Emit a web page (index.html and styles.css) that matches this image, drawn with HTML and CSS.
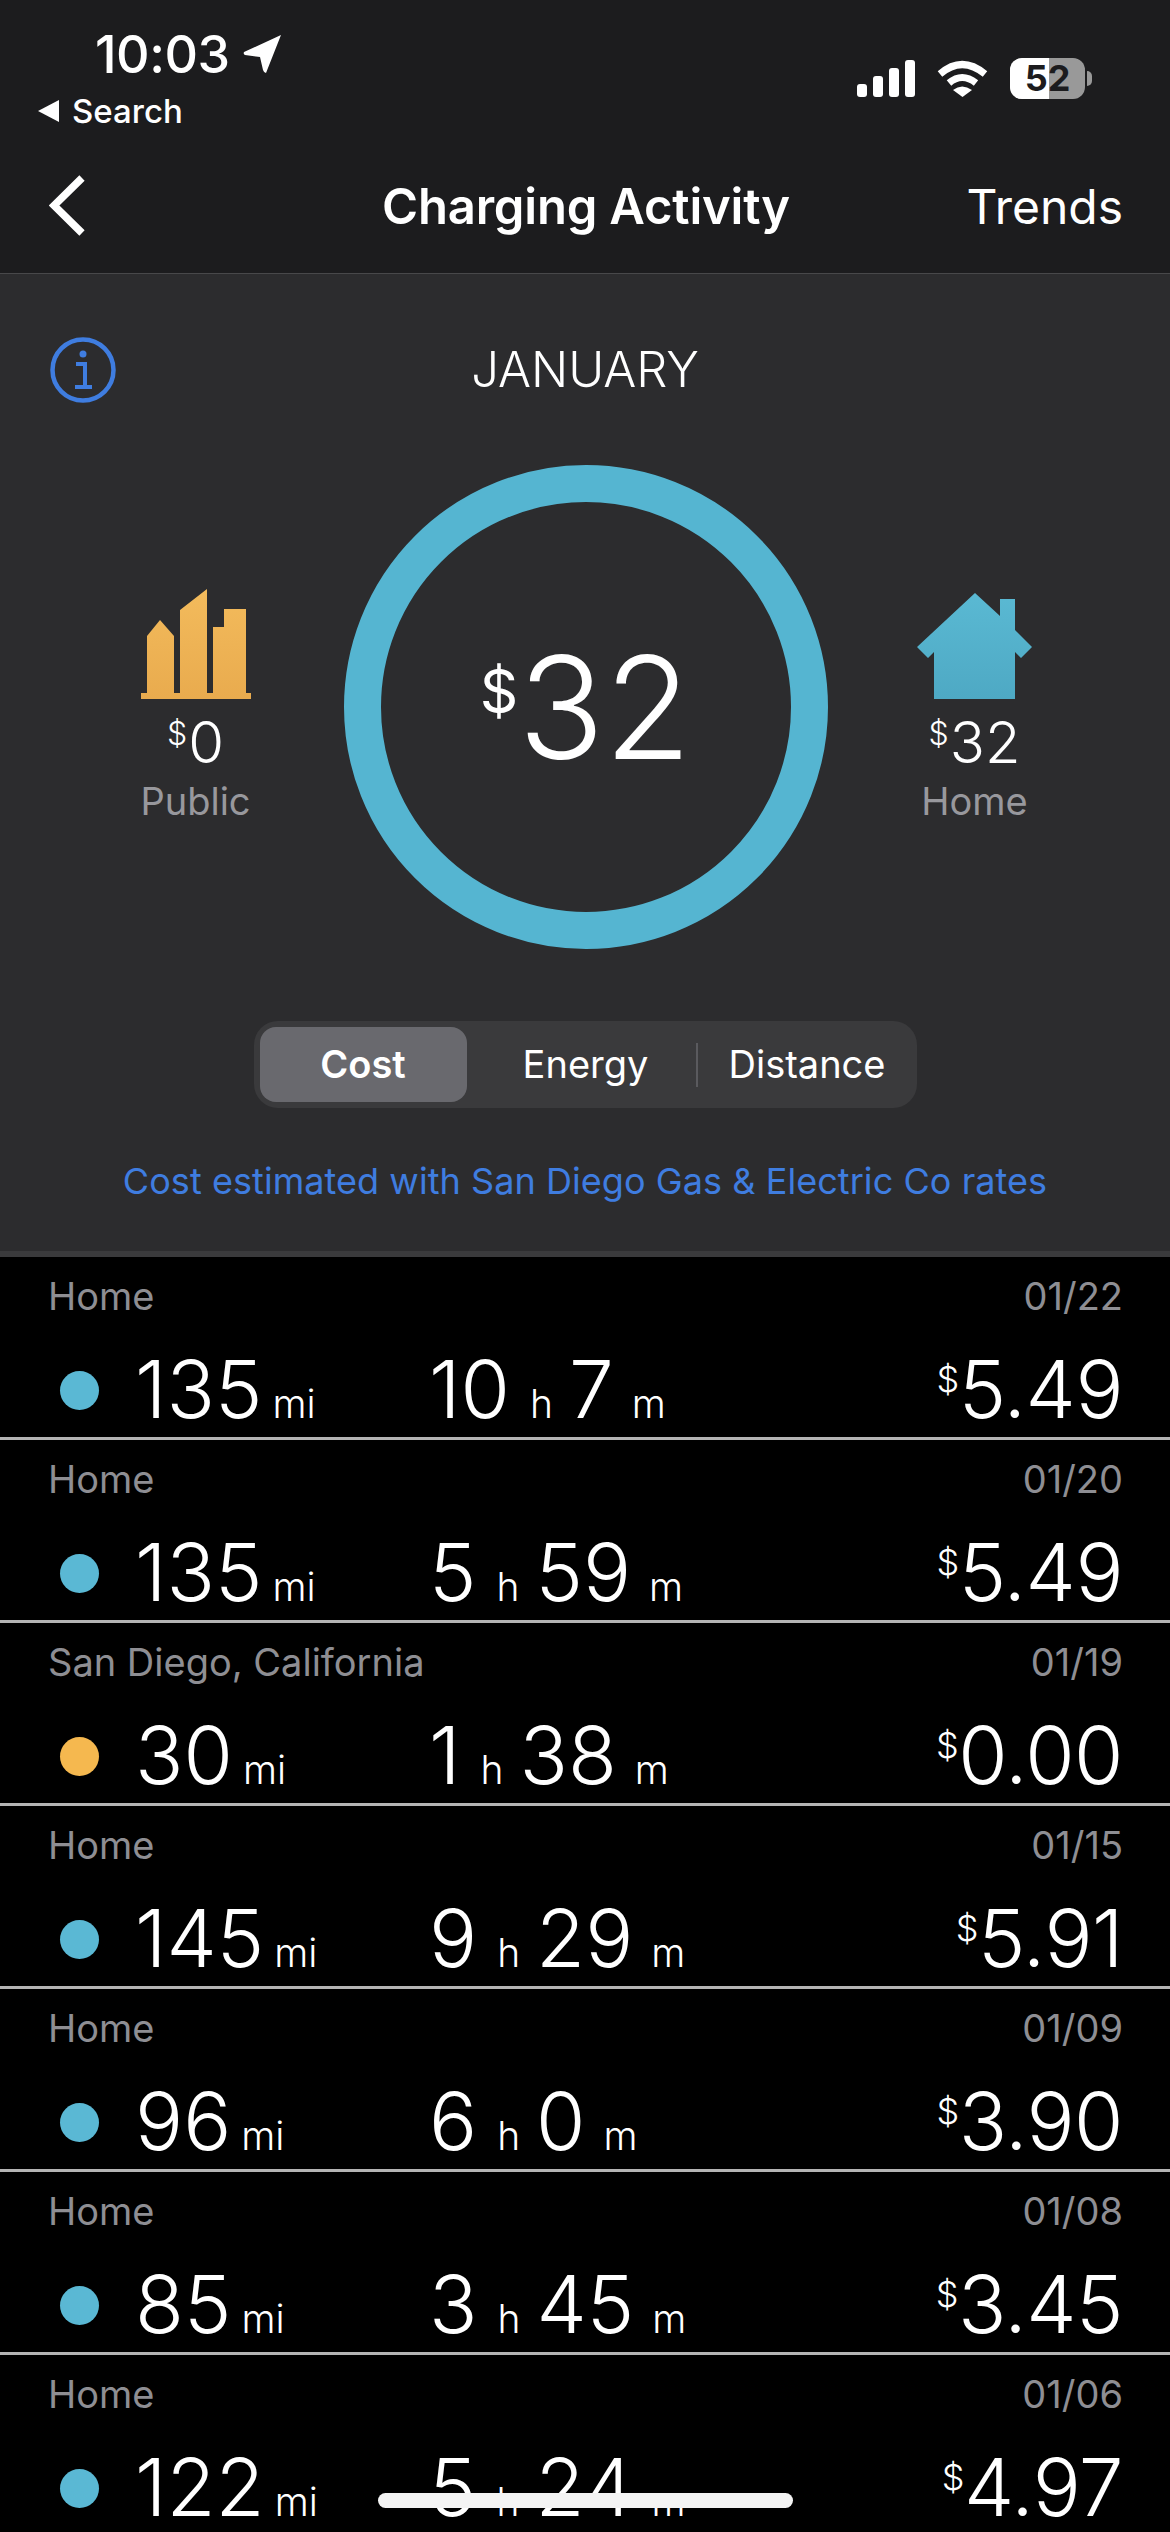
FILE: index.html
```html
<!DOCTYPE html>
<html lang="en">
<head>
	<meta charset="UTF-8">
	<title>Charging Activity</title>
	<link rel="stylesheet" href="styles.css">
</head>
<body>
<div class="phone">
	<header class="top">
		<div class="status">
			<div class="status_left">
				<div class="clock">10:03
					<svg class="arrow" viewBox="0 0 39 38" width="39" height="38"><path d="M38 0 L23 38 Q21 38 20 35 L17 22 L2 20 Q0 19 1 17 Z" fill="#fff"/></svg>
				</div>
				<div class="search"><span class="tri"></span>Search</div>
			</div>
			<div class="status_right">
				<svg viewBox="0 0 58 37" width="58" height="37"><g fill="#fff"><rect x="0" y="24" width="10" height="13" rx="3"/><rect x="16" y="16" width="10" height="21" rx="3"/><rect x="32" y="8" width="10" height="29" rx="3"/><rect x="48" y="0" width="10" height="37" rx="3"/></g></svg>
				<svg viewBox="0 0 51 37" width="51" height="37"><g fill="none" stroke="#fff" stroke-width="7"><path d="M3 14 Q25 -5 48 14"/><path d="M12 23 Q25 12 39 23"/></g><path d="M16 30 Q25 23 35 30 L25.500 37 Z" fill="#fff"/></svg>
				<div class="battery"><span class="level"></span><span class="pct">52</span><span class="tip"></span></div>
			</div>
		</div>
		<nav class="nav">
			<svg class="back" viewBox="0 0 38 61" width="38" height="61"><path d="M33 3 L5 30.500 L33 58" fill="none" stroke="#fff" stroke-width="7.500"/></svg>
			<h1>Charging Activity</h1>
			<span class="trends">Trends</span>
		</nav>
	</header>

	<section class="panel">
		<div class="month_row">
			<svg class="info" viewBox="0 0 66 66" width="66" height="66">
				<circle cx="33" cy="33" r="30.500" fill="none" stroke="#3f7de0" stroke-width="4.500"/>
				<circle cx="33" cy="17" r="3.500" fill="#3f7de0"/>
				<path d="M26 27 H35 V49 M25 50 H42" fill="none" stroke="#3f7de0" stroke-width="4"/>
			</svg>
			<span>JANUARY</span>
		</div>
		<div class="summary">
			<div class="side">
				<svg viewBox="0 0 110 110" width="110" height="110">
					<defs><linearGradient id="gold" x1="0" y1="0" x2="0" y2="1"><stop offset="0" stop-color="#f3bb5c"/><stop offset="1" stop-color="#e9ab4e"/></linearGradient></defs>
					<path fill="url(#gold)" d="M6 104 V47 L19 31 L33 47 V104 Z M39 104 V21 L66 0 V104 Z M72 104 V38 H83 V20 H105 V104 Z M0 104 H110 V110 H0 Z"/>
				</svg>
				<div class="side_cost"><sup>$</sup>0</div>
				<div class="side_name">Public</div>
			</div>
			<div class="ring">
				<div class="total"><sup>$</sup>32</div>
			</div>
			<div class="side">
				<svg class="house" viewBox="0 0 115 106" width="115" height="106">
					<defs><linearGradient id="teal" x1="0" y1="0" x2="0" y2="1"><stop offset="0" stop-color="#5ab9d3"/><stop offset="1" stop-color="#4ea9c4"/></linearGradient></defs>
					<path fill="url(#teal)" d="M58 0 L83 23 V6 H98 V37 L115 54 L104 65 L98 59 V106 H17 V59 L11 65 L0 54 Z"/>
				</svg>
				<div class="side_cost"><sup>$</sup>32</div>
				<div class="side_name">Home</div>
			</div>
		</div>
		<div class="segments">
			<span class="seg seg_cost">Cost</span>
			<span class="seg seg_energy">Energy</span>
			<span class="seg_line"></span>
			<span class="seg seg_dist">Distance</span>
		</div>
		<p class="rates">Cost estimated with San Diego Gas &amp; Electric Co rates</p>
	</section>

	<main class="list">
		<div class="row">
			<div class="row_top"><span>Home</span><span>01/22</span></div>
			<div class="row_main"><i class="dot"></i><span class="dist">135<small>mi</small></span><span class="dur">10<small class="h">h</small>7<small class="m">m</small></span><span class="cost"><sup>$</sup>5.49</span></div>
		</div>
		<div class="row">
			<div class="row_top"><span>Home</span><span>01/20</span></div>
			<div class="row_main"><i class="dot"></i><span class="dist">135<small>mi</small></span><span class="dur">5<small class="h">h</small>59<small class="m">m</small></span><span class="cost"><sup>$</sup>5.49</span></div>
		</div>
		<div class="row">
			<div class="row_top"><span>San Diego, California</span><span>01/19</span></div>
			<div class="row_main"><i class="dot dot_public"></i><span class="dist">30<small>mi</small></span><span class="dur">1<small class="h">h</small>38<small class="m">m</small></span><span class="cost"><sup>$</sup>0.00</span></div>
		</div>
		<div class="row">
			<div class="row_top"><span>Home</span><span>01/15</span></div>
			<div class="row_main"><i class="dot"></i><span class="dist">145<small>mi</small></span><span class="dur">9<small class="h">h</small>29<small class="m">m</small></span><span class="cost"><sup>$</sup>5.91</span></div>
		</div>
		<div class="row">
			<div class="row_top"><span>Home</span><span>01/09</span></div>
			<div class="row_main"><i class="dot"></i><span class="dist">96<small>mi</small></span><span class="dur">6<small class="h">h</small>0<small class="m">m</small></span><span class="cost"><sup>$</sup>3.90</span></div>
		</div>
		<div class="row">
			<div class="row_top"><span>Home</span><span>01/08</span></div>
			<div class="row_main"><i class="dot"></i><span class="dist">85<small>mi</small></span><span class="dur">3<small class="h">h</small>45<small class="m">m</small></span><span class="cost"><sup>$</sup>3.45</span></div>
		</div>
		<div class="row">
			<div class="row_top"><span>Home</span><span>01/06</span></div>
			<div class="row_main"><i class="dot"></i><span class="dist">122<small>mi</small></span><span class="dur">5<small class="h">h</small>24<small class="m">m</small></span><span class="cost"><sup>$</sup>4.97</span></div>
		</div>
	</main>

	<div class="home_bar"></div>
</div>
</body>
</html>
```

FILE: styles.css
```css
body {
	margin: 0;
	background-color: #000;
	font-family: Inter, "Liberation Sans", sans-serif;
	color: #fff;
}
.phone {
	position: relative;
	width: 1170px;
	height: 2532px;
	overflow: hidden;
}

/* status bar and nav */
.top {
	height: 273px;
	background-color: #1c1c1e;
	border-bottom: 1px solid #48484a;
}
.status {
	height: 142px;
	display: flex;
	justify-content: space-between;
}
.status_left {
	padding: 26px 0 0 38px;
}
.clock {
	display: flex;
	align-items: center;
	gap: 13px;
	padding-left: 57px;
	height: 56px;
	font-size: 52px;
	font-weight: 500;
	letter-spacing: -0.5px;
}
.search {
	display: flex;
	align-items: center;
	gap: 13px;
	margin-top: 9px;
	font-size: 33px;
	font-weight: 500;
}
.tri {
	width: 0;
	height: 0;
	border-style: solid;
	border-width: 11px 21px 11px 0;
	border-color: transparent #fff transparent transparent;
}
.status_right {
	display: flex;
	align-items: center;
	gap: 22px;
	height: 156px;
	padding-right: 85px;
}
.battery {
	position: relative;
	width: 75px;
	height: 41px;
	border-radius: 12px;
	background-color: #999;
	font-size: 36px;
	font-weight: 700;
	line-height: 41px;
	text-align: center;
	color: #1c1c1e;
}
.level {
	position: absolute;
	left: 0;
	top: 0;
	width: 39px;
	height: 41px;
	background-color: #fff;
	border-radius: 12px 0 0 12px;
}
.pct {
	position: relative;
}
.tip {
	position: absolute;
	right: -7px;
	top: 13px;
	width: 5px;
	height: 15px;
	background-color: #999;
	border-radius: 0 6px 6px 0;
}
.nav {
	display: grid;
	grid-template-columns: 1fr auto 1fr;
	align-items: center;
	height: 129px;
	padding: 0 47px 2px 49px;
}
.nav h1 {
	margin: 0;
	font-size: 49px;
	font-weight: 600;
	letter-spacing: -0.2px;
}
.trends {
	justify-self: end;
	font-size: 48px;
	font-weight: 400;
}
.back {
	margin-top: -2px;
}

/* top panel */
.panel {
	height: 977px;
	background-color: #2c2c2e;
	border-bottom: 6px solid #3a3a3c;
	text-align: center;
}
.month_row {
	position: relative;
	padding-top: 73px;
	height: 46px;
	line-height: 46px;
	font-size: 49px;
	font-weight: 300;
}
.info {
	position: absolute;
	left: 50px;
	top: 63px;
}
.summary {
	display: flex;
	justify-content: center;
	align-items: center;
	margin-top: 72px;
}
.ring {
	width: 484px;
	height: 484px;
	box-sizing: border-box;
	border: 37px solid #55b5d1;
	border-radius: 50%;
	display: flex;
	align-items: center;
	justify-content: center;
	margin: 0 87px 0 88px;
}
.total {
	font-size: 142px;
	font-weight: 300;
	line-height: 1;
}
.total sup {
	font-size: 60px;
	font-weight: 400;
	vertical-align: 46px;
	line-height: 0;
}
.side {
	width: 120px;
	display: flex;
	flex-direction: column;
	align-items: center;
}
.house {
	margin-top: 4px;
}
.side_cost {
	margin-top: 10px;
	font-size: 58px;
	font-weight: 300;
	line-height: 66px;
}
.side_cost sup {
	font-size: 32px;
	vertical-align: 18px;
	line-height: 0;
	margin-right: 1px;
}
.side_name {
	margin-top: 2px;
	font-size: 38px;
	color: #98989d;
	line-height: 48px;
}
.segments {
	position: relative;
	display: flex;
	align-items: center;
	box-sizing: border-box;
	width: 663px;
	height: 87px;
	margin: 72px auto 0;
	background-color: #3a3a3c;
	border-radius: 24px;
	font-size: 38px;
}
.seg {
	display: block;
	text-align: center;
	line-height: 75px;
}
.seg_cost {
	width: 207px;
	margin-left: 6px;
	background-color: #69696e;
	border-radius: 16px;
	font-weight: 600;
}
.seg_energy {
	box-sizing: border-box;
	width: 229px;
	padding-left: 9px;
}
.seg_line {
	width: 2px;
	height: 44px;
	background-color: #5a5a5e;
}
.seg_dist {
	width: 219px;
}
.rates {
	margin: 51px 0 0;
	font-size: 36px;
	letter-spacing: 0.06px;
	line-height: 44px;
	color: #3f7de0;
}

/* charging rows */
.row {
	height: 180px;
	border-bottom: 3px solid #b4b4b4;
}
.row_top {
	display: flex;
	justify-content: space-between;
	padding: 16px 47px 0 48px;
	font-size: 38px;
	line-height: 46px;
	color: #8e8e93;
}
.row_main {
	display: flex;
	align-items: baseline;
	padding: 0 47px 0 60px;
	margin-top: 25px;
	font-size: 80px;
	font-weight: 300;
	line-height: 90px;
}
.dot {
	width: 39px;
	height: 39px;
	border-radius: 50%;
	background-color: #5ab8d4;
	margin: 0 36px 12px 0;
	align-self: center;
}
.dot_public {
	background-color: #f5b84f;
}
.dist {
	width: 294px;
}
.dist small,
.dur small {
	font-size: 39px;
}
.dist small {
	margin-left: 10px;
}
.dur small.h {
	margin: 0 16px 0 20px;
}
.dur small.m {
	margin-left: 18px;
}
.cost {
	margin-left: auto;
	letter-spacing: -0.5px;
}
.cost sup {
	font-size: 36px;
	vertical-align: 26px;
	line-height: 0;
}
.home_bar {
	position: absolute;
	left: 378px;
	top: 2493px;
	width: 415px;
	height: 15px;
	background-color: #f4f4f4;
	border-radius: 8px;
}
```
